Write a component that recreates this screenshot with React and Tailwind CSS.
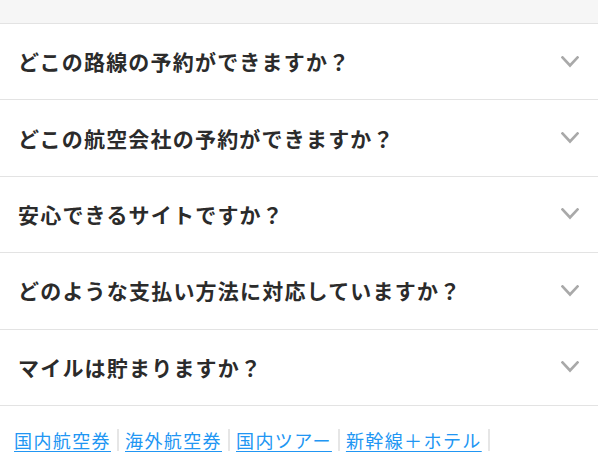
import React from "react";

const items = [
  "どこの路線の予約ができますか？",
  "どこの航空会社の予約ができますか？",
  "安心できるサイトですか？",
  "どのような支払い方法に対応していますか？",
  "マイルは貯まりますか？",
];

const links = ["国内航空券", "海外航空券", "国内ツアー", "新幹線＋ホテル"];

function Chevron() {
  return (
    <svg width="18" height="12" viewBox="0 0 18 12" className="shrink-0">
      <polyline
        points="1.5,1.5 9,9.5 16.5,1.5"
        fill="none"
        stroke="#a9a9a9"
        strokeWidth="2.6"
        strokeLinecap="square"
      />
    </svg>
  );
}

export default function App() {
  return (
    <div
      className="w-[598px] h-[462px] bg-white overflow-hidden"
      style={{ fontFamily: '"Noto Sans CJK JP", "Noto Sans", sans-serif' }}
    >
      <div className="h-[24px] bg-[#f6f6f6] border-b border-[#e3e3e3]" />
      {items.map((t) => (
        <div
          key={t}
          className="h-[76.4px] border-b border-[#e3e3e3] flex items-center justify-between pl-[18px] pr-[19px]"
        >
          <span className="text-[21px] font-bold tracking-[1.2px] text-[#2b2b2b] leading-none">
            {t}
          </span>
          <Chevron />
        </div>
      ))}
      <div className="flex items-center pl-[14px] pt-[23px]">
        {links.map((l) => (
          <div key={l} className="flex items-center">
            <a
              href="#"
              className="text-[18px] tracking-[1.4px] text-[#2196f3] underline underline-offset-[3px] leading-none"
            >
              {l}
            </a>
            <span className="mx-[6px] w-[2px] h-[22px] bg-[#e6e6e6]" />
          </div>
        ))}
      </div>
    </div>
  );
}
